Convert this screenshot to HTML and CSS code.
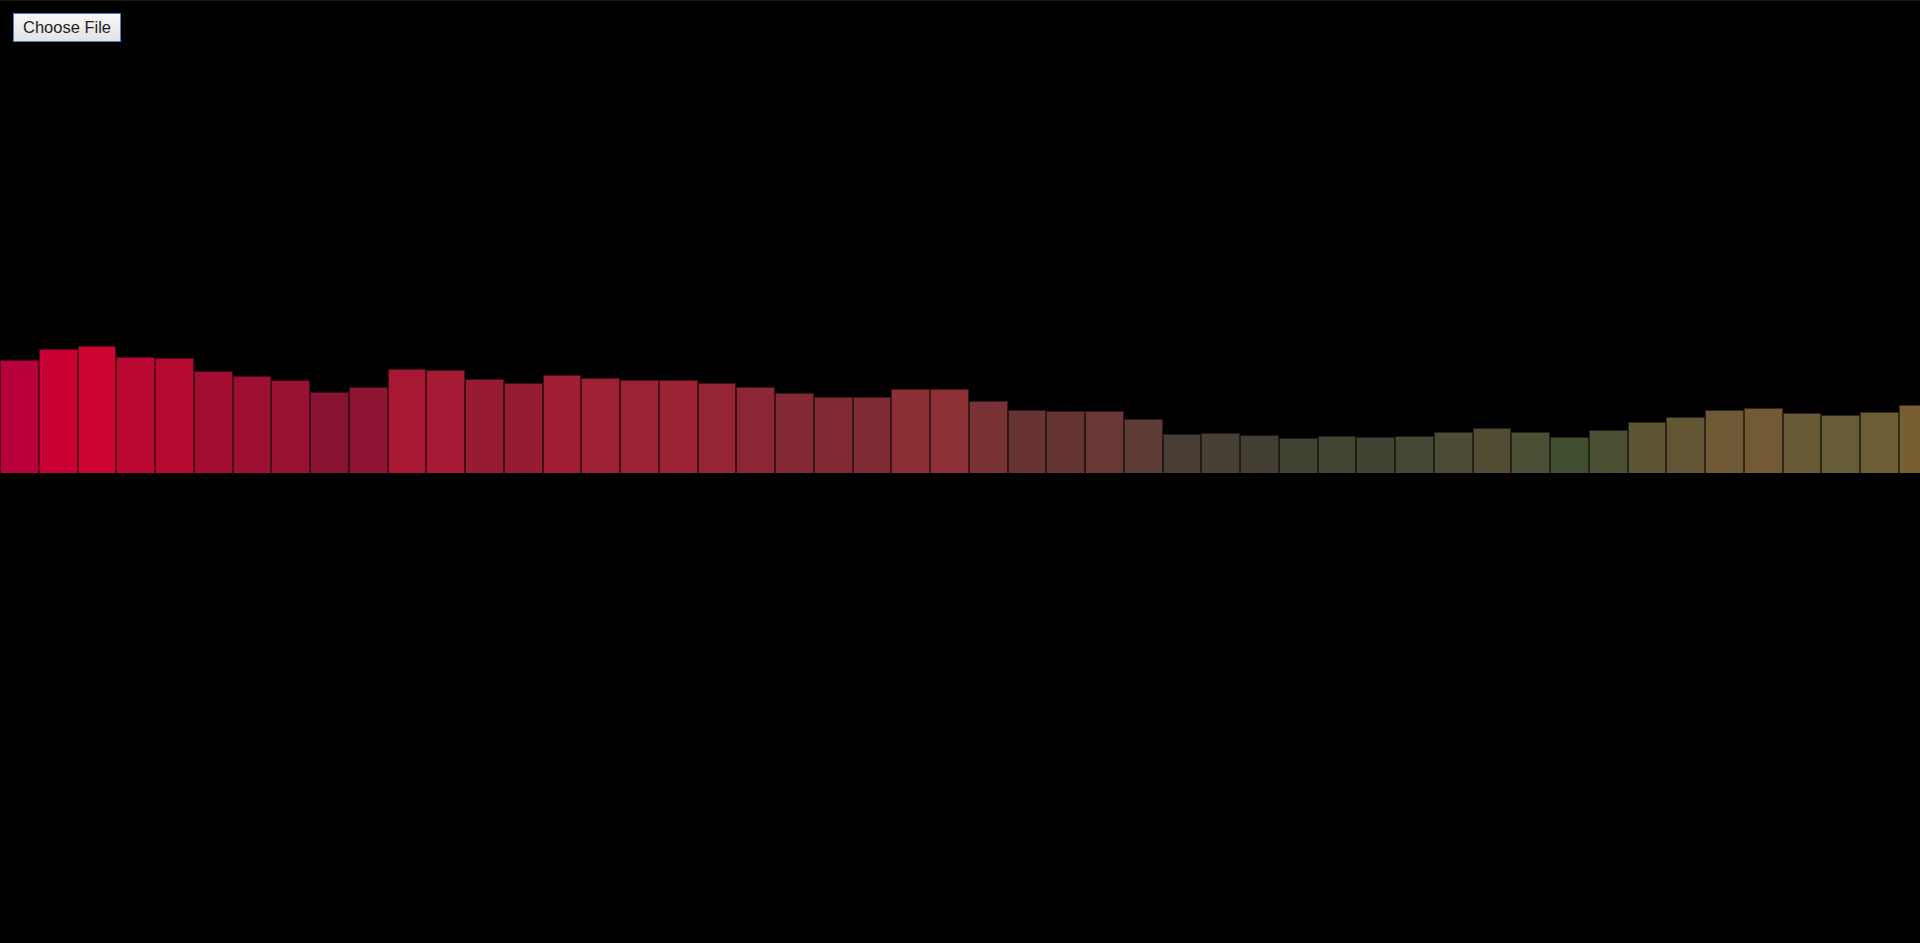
FILE: index.html
```html
<!DOCTYPE html>
<html>

  <head>
    <meta charset="UTF-8">
    <title>Audio Visualizer</title>
    <link rel="stylesheet" href="styles.css">
  </head>

  <body>
    <div id="wrap">
      <div id="controls">
        <button type="button" id="file-btn" class="file-btn">Choose File</button>
      </div>
      <div id="bars" class="bars">
        <div class="bar" style="height: 113px; background: #b8003a;"></div>
        <div class="bar" style="height: 124px; background: #c90033;"></div>
        <div class="bar" style="height: 127px; background: #cc0530;"></div>
        <div class="bar" style="height: 116px; background: #bb0833;"></div>
        <div class="bar" style="height: 115px; background: #b70a31;"></div>
        <div class="bar" style="height: 102px; background: #a30d32;"></div>
        <div class="bar" style="height: 97px; background: #9c1033;"></div>
        <div class="bar" style="height: 93px; background: #9a1233;"></div>
        <div class="bar" style="height: 81px; background: #881232;"></div>
        <div class="bar" style="height: 86px; background: #901433;"></div>
        <div class="bar" style="height: 104px; background: #a81833;"></div>
        <div class="bar" style="height: 103px; background: #a61a35;"></div>
        <div class="bar" style="height: 94px; background: #961a32;"></div>
        <div class="bar" style="height: 90px; background: #931b32;"></div>
        <div class="bar" style="height: 98px; background: #a01e33;"></div>
        <div class="bar" style="height: 95px; background: #9e2034;"></div>
        <div class="bar" style="height: 93px; background: #992234;"></div>
        <div class="bar" style="height: 93px; background: #9c2334;"></div>
        <div class="bar" style="height: 90px; background: #952534;"></div>
        <div class="bar" style="height: 86px; background: #8c2634;"></div>
        <div class="bar" style="height: 80px; background: #832934;"></div>
        <div class="bar" style="height: 76px; background: #7f2a33;"></div>
        <div class="bar" style="height: 76px; background: #7f2b33;"></div>
        <div class="bar" style="height: 84px; background: #8b2f35;"></div>
        <div class="bar" style="height: 84px; background: #8d3035;"></div>
        <div class="bar" style="height: 72px; background: #793234;"></div>
        <div class="bar" style="height: 63px; background: #673433;"></div>
        <div class="bar" style="height: 62px; background: #663533;"></div>
        <div class="bar" style="height: 62px; background: #693834;"></div>
        <div class="bar" style="height: 54px; background: #5c3c34;"></div>
        <div class="bar" style="height: 39px; background: #483e35;"></div>
        <div class="bar" style="height: 40px; background: #483f35;"></div>
        <div class="bar" style="height: 38px; background: #433e33;"></div>
        <div class="bar" style="height: 35px; background: #404232;"></div>
        <div class="bar" style="height: 37px; background: #434533;"></div>
        <div class="bar" style="height: 36px; background: #404533;"></div>
        <div class="bar" style="height: 37px; background: #444834;"></div>
        <div class="bar" style="height: 41px; background: #4b4c33;"></div>
        <div class="bar" style="height: 45px; background: #524c33;"></div>
        <div class="bar" style="height: 41px; background: #4b4f33;"></div>
        <div class="bar" style="height: 36px; background: #414f30;"></div>
        <div class="bar" style="height: 43px; background: #4b5033;"></div>
        <div class="bar" style="height: 51px; background: #5d5534;"></div>
        <div class="bar" style="height: 56px; background: #625634;"></div>
        <div class="bar" style="height: 63px; background: #6f5934;"></div>
        <div class="bar" style="height: 65px; background: #715a34;"></div>
        <div class="bar" style="height: 60px; background: #675a35;"></div>
        <div class="bar" style="height: 58px; background: #665c35;"></div>
        <div class="bar" style="height: 61px; background: #6c5d35;"></div>
        <div class="bar" style="height: 68px; background: #775e33;"></div>
      </div>
    </div>
  </body>

</html>
```

FILE: styles.css
```css
html,
body {
  margin: 0;
  padding: 0;
  background: #000;
}

#wrap {
  box-sizing: border-box;
  height: 943px;
  border-top: 1px solid #1a1a1a;
  overflow: hidden;
}

#controls {
  padding: 12px 0 0 13px;
  height: 29px;
}

.file-btn {
  display: block;
  box-sizing: border-box;
  height: 29px;
  margin: 0;
  padding: 0 9px;
  border: 1px solid #4a7fd3;
  border-radius: 0;
  background: linear-gradient(#f6f6f6, #e3e3e3);
  color: #1e1e1e;
  font-size: 16.5px;
  line-height: 27px;
  font-family: "Liberation Sans", Arial, sans-serif;
  cursor: pointer;
}

.bars {
  display: flex;
  align-items: flex-end;
  height: 431px;
  overflow: hidden;
}

.bar {
  flex: none;
  box-sizing: border-box;
  width: 38.75px;
  border: 1px solid rgba(0, 0, 0, 0.55);
  border-bottom: 0;
}
```
